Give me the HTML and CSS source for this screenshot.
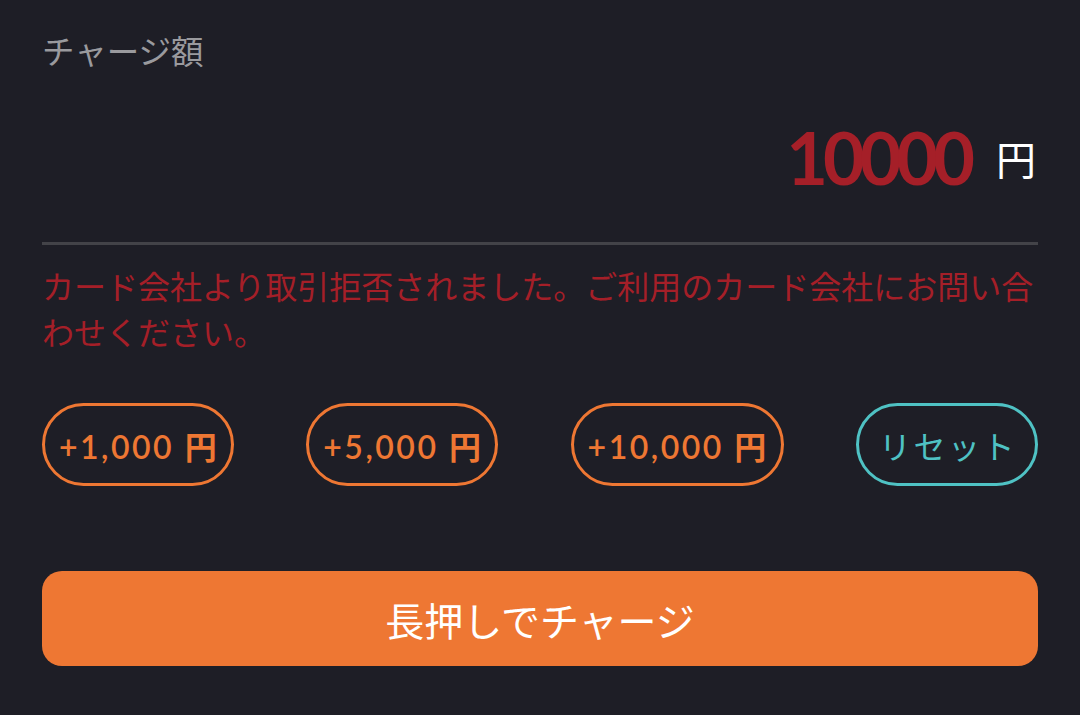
FILE: index.html
```html
<!DOCTYPE html>
<html lang="ja">
<head>
<meta charset="utf-8">
<title>チャージ</title>
<link rel="stylesheet" href="styles.css">
</head>
<body>
<main class="charge">
  <div class="label">チャージ額</div>
  <div class="amount-row">
    <span class="amount">10000</span>
    <span class="unit">円</span>
  </div>
  <div class="divider"></div>
  <p class="error">カード会社より取引拒否されました。ご利用のカード会社にお問い合わせください。</p>
  <div class="chips">
    <button class="chip">+1,000 円</button>
    <button class="chip">+5,000 円</button>
    <button class="chip">+10,000 円</button>
    <button class="chip reset">リセット</button>
  </div>
  <button class="submit">長押しでチャージ</button>
</main>
</body>
</html>
```
FILE: styles.css
```css
* { box-sizing: border-box; }
html, body {
  margin: 0;
  padding: 0;
  background: #1e1e26;
  height: 100%;
}
body {
  font-family: Lato, "Noto Sans CJK JP", sans-serif;
}
.charge {
  padding: 30px 42px 0 42px;
  display: flex;
  flex-direction: column;
}
.label {
  color: #9a9a9e;
  font-size: 32.5px;
  line-height: 44px;
}
.amount-row {
  display: flex;
  justify-content: flex-end;
  align-items: center;
  padding-right: 2px;
  margin-top: 32px;
  height: 96px;
}
.amount {
  color: #a51f28;
  font-weight: 700;
  font-size: 72px;
  letter-spacing: -5px;
  line-height: 96px;
  position: relative;
  top: 3px;
}
.unit {
  color: #ffffff;
  font-size: 40px;
  line-height: 96px;
  margin-left: 26px;
  position: relative;
  top: 6px;
}
.divider {
  height: 3px;
  background: #434348;
  margin-top: 40px;
}
.error {
  margin: 19px 0 0 0;
  color: #a51f28;
  font-size: 32px;
  line-height: 46px;
}
.chips {
  display: flex;
  justify-content: space-between;
  margin-top: 47px;
}
.chip {
  height: 83px;
  border: 3px solid #ee7733;
  border-radius: 42px;
  background: transparent;
  color: #ee7733;
  font-family: Lato, "Noto Sans CJK JP", sans-serif;
  font-weight: 600;
  font-size: 32px;
  letter-spacing: 2.5px;
  padding: 0 12px 0 14px;
  display: flex;
  align-items: center;
  justify-content: center;
}
.chip.reset {
  border-color: #4fc2c4;
  color: #4fc2c4;
  font-weight: 400;
  padding: 0 18px 0 20px;
}
.submit {
  margin-top: 85px;
  height: 95px;
  border: none;
  border-radius: 20px;
  background: #ee7733;
  color: #ffffff;
  font-family: Lato, "Noto Sans CJK JP", sans-serif;
  font-size: 39px;
  display: flex;
  align-items: center;
  justify-content: center;
}
```
